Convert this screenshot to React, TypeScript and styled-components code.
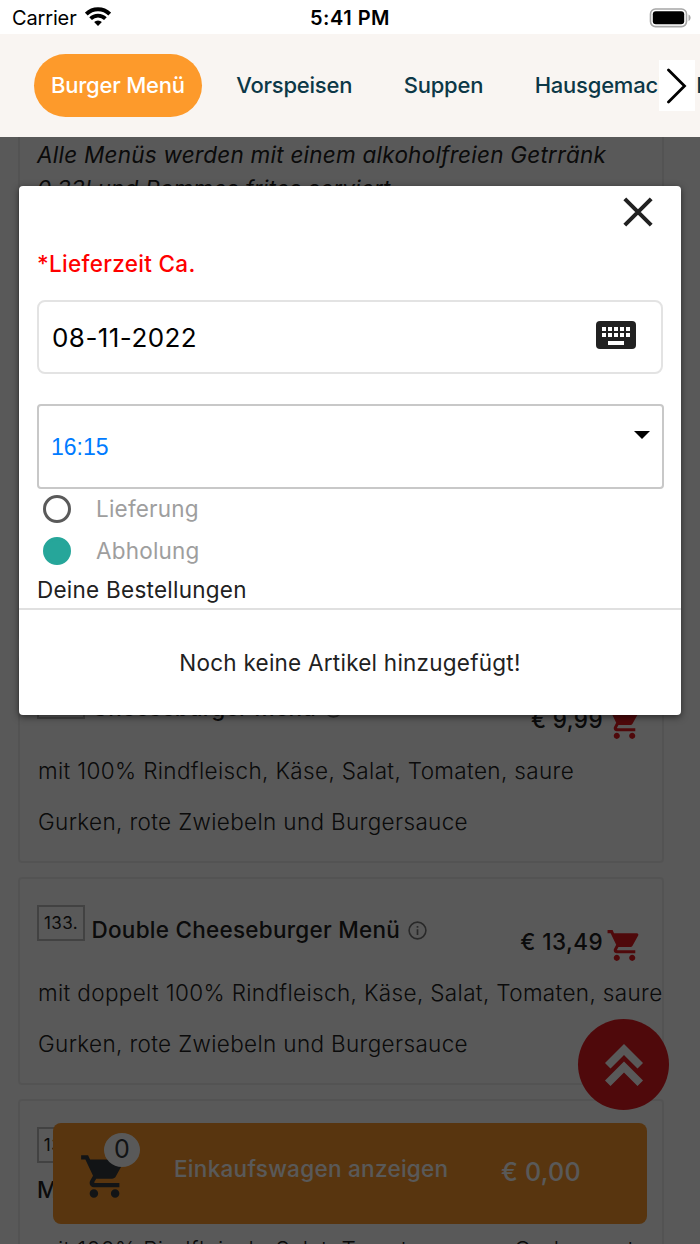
import React from 'react';
import styled, { createGlobalStyle } from 'styled-components';

const Global = createGlobalStyle`
  * { box-sizing: border-box; }
  body { margin: 0; background: #fff; font-family: Inter, "Liberation Sans", sans-serif; color: #212121; }
`;

const Screen = styled.div`
  position: relative;
  display: flex;
  flex-direction: column;
  width: 700px;
  height: 1244px;
  overflow: hidden;
  background: #fff;
`;

const StatusBar = styled.header`
  display: grid;
  grid-template-columns: 1fr auto 1fr;
  align-items: center;
  height: 34px;
  padding: 1px 9px 0 12px;
  flex: none;
  color: #000;
  line-height: 34px;
`;
const Carrier = styled.div`
  display: flex;
  align-items: center;
  gap: 8px;
  font-size: 20px;
  letter-spacing: -0.15px;
`;
const WifiIcon = styled.svg`
  margin-bottom: 3px;
`;
const Clock = styled.div`
  font-size: 20px;
  font-weight: 600;
  letter-spacing: 0.5px;
  margin-right: 3px;
`;
const Battery = styled.svg`
  justify-self: end;
  margin-bottom: 1px;
`;

const CategoryNav = styled.nav`
  position: relative;
  display: flex;
  align-items: center;
  flex: none;
  height: 103px;
  padding-left: 34px;
  background: #f9f5f2;
  overflow: hidden;
`;
const Category = styled.a<{ $active?: boolean }>`
  flex: none;
  height: 63px;
  line-height: 63px;
  padding: 0 17px;
  margin-right: 17.5px;
  border-radius: 32px;
  font-size: 22px;
  font-weight: 500;
  letter-spacing: -0.22px;
  white-space: nowrap;
  color: ${(p) => (p.$active ? '#fff' : '#0c3847')};
  background: ${(p) => (p.$active ? '#fd9a2b' : 'transparent')};
`;
const ScrollButton = styled.button`
  position: absolute;
  right: 5px;
  top: 26px;
  display: flex;
  align-items: center;
  justify-content: center;
  width: 36px;
  height: 51px;
  padding: 0;
  border: 0;
  background: #fff;
`;

const Menu = styled.main`
  display: flex;
  flex-direction: column;
  gap: 14px;
  padding: 0 36px 0 18px;
`;
const Card = styled.section<{ $height: number; $open?: boolean }>`
  flex: none;
  height: ${(p) => p.$height}px;
  padding: 0 0 0 17px;
  border: 2px solid #eeeeee;
  border-top-width: ${(p) => (p.$open ? 0 : 2)}px;
  border-radius: ${(p) => (p.$open ? '0 0 4px 4px' : '4px')};
`;
const Intro = styled.p`
  margin: 0;
  padding-top: 1px;
  width: 600px;
  font-size: 22.5px;
  font-style: italic;
  line-height: 33.5px;
  letter-spacing: 0.24px;
`;
const CardHead = styled.div<{ $wrapped?: boolean }>`
  display: flex;
  height: ${(p) => (p.$wrapped ? 123 : 88)}px;
  padding-top: 32px;
`;
const Title = styled.h3`
  flex: 1;
  margin: 0;
  font-size: 22.5px;
  font-weight: 500;
  line-height: 38px;
  letter-spacing: 0.26px;
  white-space: nowrap;
`;
const Tag = styled.span`
  float: left;
  width: 48px;
  height: 36px;
  margin: -6px 6.5px 0 0;
  border: 2px solid #bdbdbd;
  font-size: 17px;
  font-weight: 400;
  line-height: 33px;
  text-align: center;
  letter-spacing: 0.4px;
`;
const InfoIcon = styled.svg`
  margin-left: 8px;
  vertical-align: -2px;
`;
const Price = styled.div`
  display: flex;
  gap: 2.5px;
  height: 37px;
  margin: 16px 19.5px 0 0;
  font-size: 22.5px;
  font-weight: 500;
  line-height: 30px;
  letter-spacing: 0.4px;
`;
const Description = styled.p`
  margin: 0 0 0 1px;
  font-size: 22.5px;
  font-weight: 300;
  line-height: 51px;
  letter-spacing: 0.35px;
  white-space: nowrap;
`;

const ToTop = styled.button`
  position: absolute;
  left: 578px;
  top: 1019px;
  display: flex;
  align-items: center;
  justify-content: center;
  width: 91px;
  height: 91px;
  padding: 0;
  border: 0;
  border-radius: 50%;
  background: #e31b20;
`;
const CartBar = styled.div`
  position: absolute;
  left: 53px;
  top: 1123px;
  display: flex;
  width: 594px;
  height: 101px;
  padding-left: 26px;
  border-radius: 8px;
  background: #fb982b;
  color: #fff;
`;
const CartIcon = styled.div`
  position: relative;
  width: 95px;
  padding-top: 28px;
`;
const Count = styled.span`
  position: absolute;
  left: 25px;
  top: 10px;
  width: 36px;
  height: 34px;
  border-radius: 50%;
  background: #fff;
  color: #343a40;
  font-size: 25px;
  line-height: 33px;
  text-align: center;
`;
const CartLabel = styled.span`
  width: 327px;
  font-size: 22.5px;
  font-weight: 500;
  line-height: 92px;
  letter-spacing: 0.29px;
`;
const CartTotal = styled.span`
  font-size: 25px;
  font-weight: 500;
  line-height: 99px;
  letter-spacing: 0.3px;
`;

const Backdrop = styled.div`
  position: absolute;
  inset: 137px 0 0;
  background: rgba(0, 0, 0, 0.65);
`;
const Dialog = styled.div`
  position: absolute;
  left: 19px;
  top: 186px;
  display: flex;
  flex-direction: column;
  width: 662px;
  height: 529px;
  border-radius: 4px;
  background: #fff;
  box-shadow: 0 2px 7px rgba(0, 0, 0, 0.55);
`;
const DialogHead = styled.div`
  display: flex;
  flex: none;
  justify-content: flex-end;
  height: 60px;
  padding: 10.5px 28px 0 0;
`;
const Form = styled.div`
  display: flex;
  flex: none;
  flex-direction: column;
  height: 364px;
  padding: 0 18px;
  border-bottom: 2px solid #e0e0e0;
`;
const FieldLabel = styled.label`
  height: 54px;
  font-size: 22.5px;
  font-weight: 500;
  line-height: 36px;
  letter-spacing: 0.3px;
  color: #f00;
`;
const DateField = styled.div`
  display: flex;
  align-items: center;
  justify-content: space-between;
  width: 625.5px;
  height: 74px;
  padding: 0 25px 0 13px;
  border: 2px solid #e3e3e3;
  border-radius: 8px;
  color: #000;
  font-size: 26px;
  letter-spacing: 0.45px;
`;
const KeyboardIcon = styled.svg`
  margin-bottom: 4px;
`;
const TimeSelect = styled.div`
  display: flex;
  justify-content: space-between;
  width: 627px;
  height: 85px;
  margin-top: 30px;
  padding: 0 12px;
  border: 2px solid #c8c8c8;
  border-radius: 4px;
  color: #007bff;
  font-family: "Liberation Sans", Arial, sans-serif;
  font-size: 23px;
  line-height: 83px;
`;
const Caret = styled.span`
  width: 0;
  height: 0;
  margin-top: 25px;
  border: 8px solid transparent;
  border-top-color: #000;
  border-bottom-width: 0;
`;
const Options = styled.div`
  display: flex;
  flex: none;
  flex-direction: column;
  height: 84px;
  margin-top: -1px;
`;
const Option = styled.label`
  display: flex;
  align-items: center;
  gap: 25px;
  height: 42px;
  padding-left: 6px;
  color: #9e9e9e;
  font-size: 22.5px;
  line-height: 28px;
  letter-spacing: 0.2px;
`;
const Radio = styled.span<{ $checked?: boolean }>`
  width: 28px;
  height: 28px;
  border: 3px solid ${(p) => (p.$checked ? '#26a69a' : '#5a5a5a')};
  border-radius: 50%;
  background: ${(p) => (p.$checked ? '#26a69a' : '#fff')};
`;
const OrdersTitle = styled.div`
  font-size: 22.5px;
  line-height: 36px;
  letter-spacing: 0.25px;
`;
const Empty = styled.div`
  flex: none;
  height: 105px;
  font-size: 22.5px;
  line-height: 106px;
  letter-spacing: 0.24px;
  text-align: center;
`;

const CART =
  'M7 18c-1.1 0-1.99.9-1.99 2S5.9 22 7 22s2-.9 2-2-.9-2-2-2zM1 2v2h2l3.6 7.59-1.35 2.45c-.16.28-.25.61-.25.96 0 1.1.9 2 2 2h12v-2H7.42c-.14 0-.25-.11-.25-.25l.03-.12.9-1.63h7.45c.75 0 1.41-.41 1.75-1.03l3.58-6.49A1.003 1.003 0 0 0 20 4H5.21l-.94-2H1zm16 16c-1.1 0-1.99.9-1.99 2s.89 2 1.99 2 2-.9 2-2-.9-2-2-2z';

const Cart = ({ size, color }: { size: number; color: string }) => (
  <svg width={size} height={size} viewBox="0 0 24 24" fill={color}>
    <path d={CART} />
  </svg>
);

const Info = () => (
  <InfoIcon width="19" height="19" viewBox="0 0 19 19" fill="none" stroke="#757575">
    <circle cx="9.5" cy="9.5" r="8.4" strokeWidth="1.6" />
    <path d="M9.5 8.3V14M9.5 5v1.8" strokeWidth="1.7" />
  </InfoIcon>
);

type Dish = { no: string; name: React.ReactNode; price?: string; lines: string[]; wrapped?: boolean };

const MenuCard = ({ no, name, price, lines, wrapped }: Dish) => (
  <Card $height={208}>
    <CardHead $wrapped={wrapped}>
      <Title>
        <Tag>{no}</Tag>
        {name}
      </Title>
      {price && (
        <Price>
          {price}
          <Cart size={37} color="#e31b20" />
        </Price>
      )}
    </CardHead>
    {lines.map((line) => (
      <Description key={line}>{line}</Description>
    ))}
  </Card>
);

export default function App() {
  return (
    <Screen>
      <Global />
      <StatusBar>
        <Carrier>
          Carrier
          <WifiIcon width="26" height="19" viewBox="0 0 26 19" fill="none" stroke="#000">
            <path d="M1.3 7a16.6 16.6 0 0 1 23.4 0" strokeWidth="3.9" />
            <path d="M5.6 11.7a10.5 10.5 0 0 1 14.8 0" strokeWidth="3.8" />
            <path d="M13 19l-3.9-3.9a5.5 5.5 0 0 1 7.8 0z" fill="#000" stroke="none" />
          </WifiIcon>
        </Carrier>
        <Clock>5:41 PM</Clock>
        <Battery width="42" height="20" viewBox="0 0 42 20">
          <rect x="1.5" y="1" width="36" height="17.6" rx="5" fill="none" stroke="#a6a6a6" strokeWidth="1.6" />
          <rect x="3.8" y="3.3" width="31.4" height="13" rx="3" fill="#000" />
          <path d="M39.5 6.5c1.3.5 2.1 1.8 2.1 3.2s-.8 2.7-2.1 3.2z" fill="#a6a6a6" />
        </Battery>
      </StatusBar>
      <CategoryNav>
        <Category $active>Burger Menü</Category>
        <Category>Vorspeisen</Category>
        <Category>Suppen</Category>
        <Category>Hausgemachte Burger</Category>
        <ScrollButton>
          <svg width="20" height="36" viewBox="0 0 20 36" fill="none" stroke="#000" strokeWidth="2.8">
            <path d="M1.5 2l16 16-16 16" strokeLinecap="round" />
          </svg>
        </ScrollButton>
      </CategoryNav>

      <Menu>
        <Card $height={504} $open>
          <Intro>
            Alle Menüs werden mit einem alkoholfreien Getrränk 0,33l und Pommes frites serviert.
          </Intro>
        </Card>
        <MenuCard
          no="132."
          name={<>Cheeseburger Menü<Info /></>}
          price="€ 9,99"
          lines={['mit 100% Rindfleisch, Käse, Salat, Tomaten, saure', 'Gurken, rote Zwiebeln und Burgersauce']}
        />
        <MenuCard
          no="133."
          name={<>Double Cheeseburger Menü<Info /></>}
          price="€ 13,49"
          lines={['mit doppelt 100% Rindfleisch, Käse, Salat, Tomaten, saure', 'Gurken, rote Zwiebeln und Burgersauce']}
        />
        <MenuCard
          no="134."
          name={<><br />Menü</>}
          wrapped
          lines={['mit 100% Rindfleisch, Salat, Tomaten, saure Gurken, rote']}
        />
      </Menu>

      <ToTop>
        <svg width="38" height="42" viewBox="0 0 38 42" fill="#fff">
          <path d="M19 0l19 19-5.5 5.5L19 11 5.5 24.5 0 19z" />
          <path d="M19 17.5l19 19-5.5 5.5L19 28.5 5.5 42 0 36.5z" />
        </svg>
      </ToTop>
      <CartBar>
        <CartIcon>
          <Cart size={51} color="#343a40" />
          <Count>0</Count>
        </CartIcon>
        <CartLabel>Einkaufswagen anzeigen</CartLabel>
        <CartTotal>€ 0,00</CartTotal>
      </CartBar>

      <Backdrop />
      <Dialog>
        <DialogHead>
          <svg width="30" height="30" viewBox="0 0 30 30" stroke="#212121" strokeWidth="4">
            <path d="M1.8 1.8l26.4 26.4M28.2 1.8L1.8 28.2" />
          </svg>
        </DialogHead>
        <Form>
          <FieldLabel>*Lieferzeit Ca.</FieldLabel>
          <DateField>
            08-11-2022
            <KeyboardIcon width="40" height="28" viewBox="0 0 40 28">
              <rect width="40" height="28" rx="4" fill="#212121" />
              {[0, 1, 2, 3, 4].map((i) => (
                <g key={i} fill="#fff">
                  <rect x={6 + i * 6} y="6" width="4" height="4" />
                  <rect x={6 + i * 6} y="12" width="4" height="4" />
                </g>
              ))}
              <rect x="12" y="20" width="16" height="4" fill="#fff" />
            </KeyboardIcon>
          </DateField>
          <TimeSelect>
            16:15
            <Caret />
          </TimeSelect>
          <Options>
            <Option><Radio />Lieferung</Option>
            <Option><Radio $checked />Abholung</Option>
          </Options>
          <OrdersTitle>Deine Bestellungen</OrdersTitle>
        </Form>
        <Empty>Noch keine Artikel hinzugefügt!</Empty>
      </Dialog>
    </Screen>
  );
}
